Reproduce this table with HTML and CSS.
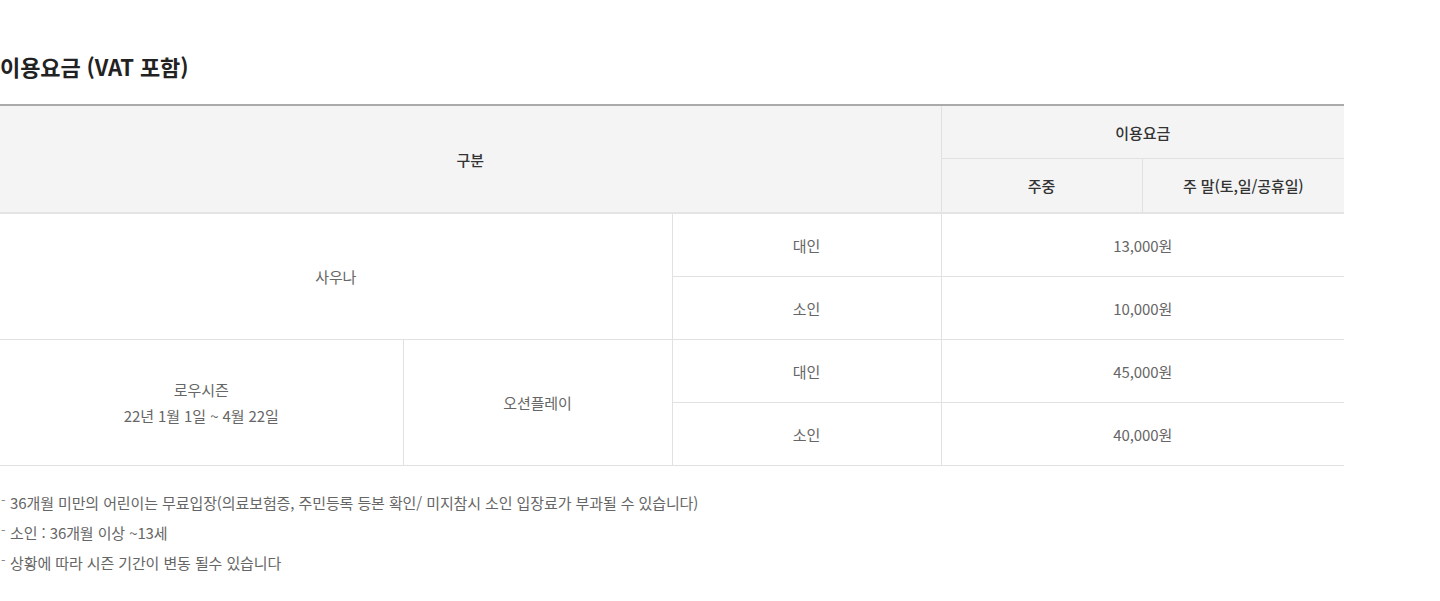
FILE: index.html
```html
<!DOCTYPE html>
<html lang="ko">
<head>
<meta charset="utf-8">
<title>이용요금</title>
<link rel="stylesheet" href="styles.css">
</head>
<body>
<div class="wrap">
  <h2 class="title">이용요금 (VAT 포함)</h2>
  <table class="price">
    <colgroup>
      <col class="c1"><col class="c2"><col class="c3"><col class="c4"><col class="c5">
    </colgroup>
    <thead>
      <tr class="h1">
        <th colspan="3" rowspan="2">구분</th>
        <th colspan="2">이용요금</th>
      </tr>
      <tr class="h2">
        <th>주중</th>
        <th>주 말(토,일/공휴일)</th>
      </tr>
    </thead>
    <tbody>
      <tr>
        <td colspan="2" rowspan="2">사우나</td>
        <td>대인</td>
        <td colspan="2">13,000원</td>
      </tr>
      <tr>
        <td>소인</td>
        <td colspan="2">10,000원</td>
      </tr>
      <tr>
        <td rowspan="2" class="multi">로우시즌<br>22년 1월 1일 ~ 4월 22일</td>
        <td rowspan="2">오션플레이</td>
        <td>대인</td>
        <td colspan="2">45,000원</td>
      </tr>
      <tr>
        <td>소인</td>
        <td colspan="2">40,000원</td>
      </tr>
    </tbody>
  </table>
  <ul class="notes">
    <li>36개월 미만의 어린이는 무료입장(의료보험증, 주민등록 등본 확인/ 미지참시 소인 입장료가 부과될 수 있습니다)</li>
    <li>소인 : 36개월 이상 ~13세</li>
    <li>상황에 따라 시즌 기간이 변동 될수 있습니다</li>
  </ul>
</div>
</body>
</html>
```
FILE: styles.css
```css
html, body {
  margin: 0;
  padding: 0;
  background: #fff;
}
body {
  font-family: "Noto Sans CJK KR", "Noto Sans", sans-serif;
  color: #666;
}
.wrap {
  width: 1344px;
  padding-top: 51px;
}
.title {
  margin: 0 0 22px;
  font-size: 22px;
  line-height: 31px;
  font-weight: 700;
  color: #222;
  letter-spacing: -0.1px;
}
.price {
  width: 1344px;
  border-collapse: collapse;
  table-layout: fixed;
  border-top: 2px solid #aaa;
  font-size: 15px;
  letter-spacing: -0.1px;
}
.c1 { width: 403px; }
.c2 { width: 269px; }
.c3 { width: 269px; }
.c4 { width: 201px; }
.c5 { width: 202px; }
.price th,
.price td {
  border: 1px solid #e1e1e1;
  text-align: center;
  vertical-align: middle;
  padding: 0;
}
.price tr > :first-child { border-left: 0; }
.price tr > :last-child { border-right: 0; }
.price td[rowspan="2"] { border-right: 1px solid #e1e1e1; }
.price th {
  background: #f4f4f4;
  font-weight: 500;
  color: #333;
}
.price .h1 th { height: 52px; }
.price .h2 th { height: 53px; }
.price thead tr.h2 th { border-bottom: 2px solid #e4e4e4; }
.price thead tr.h1 th[rowspan="2"] { border-bottom: 2px solid #e4e4e4; }
.price td {
  height: 62px;
  color: #666;
}
.price td.multi { line-height: 26px; }
.notes {
  list-style: none;
  margin: 22px 0 0;
  padding: 0;
  font-size: 15px;
  line-height: 30px;
  letter-spacing: -0.1px;
  color: #666;
}
.notes li {
  position: relative;
  padding-left: 10px;
}
.notes li::before {
  content: "-";
  position: absolute;
  left: 1px;
  top: -3px;
  color: #888;
  font-size: 13px;
}
```
